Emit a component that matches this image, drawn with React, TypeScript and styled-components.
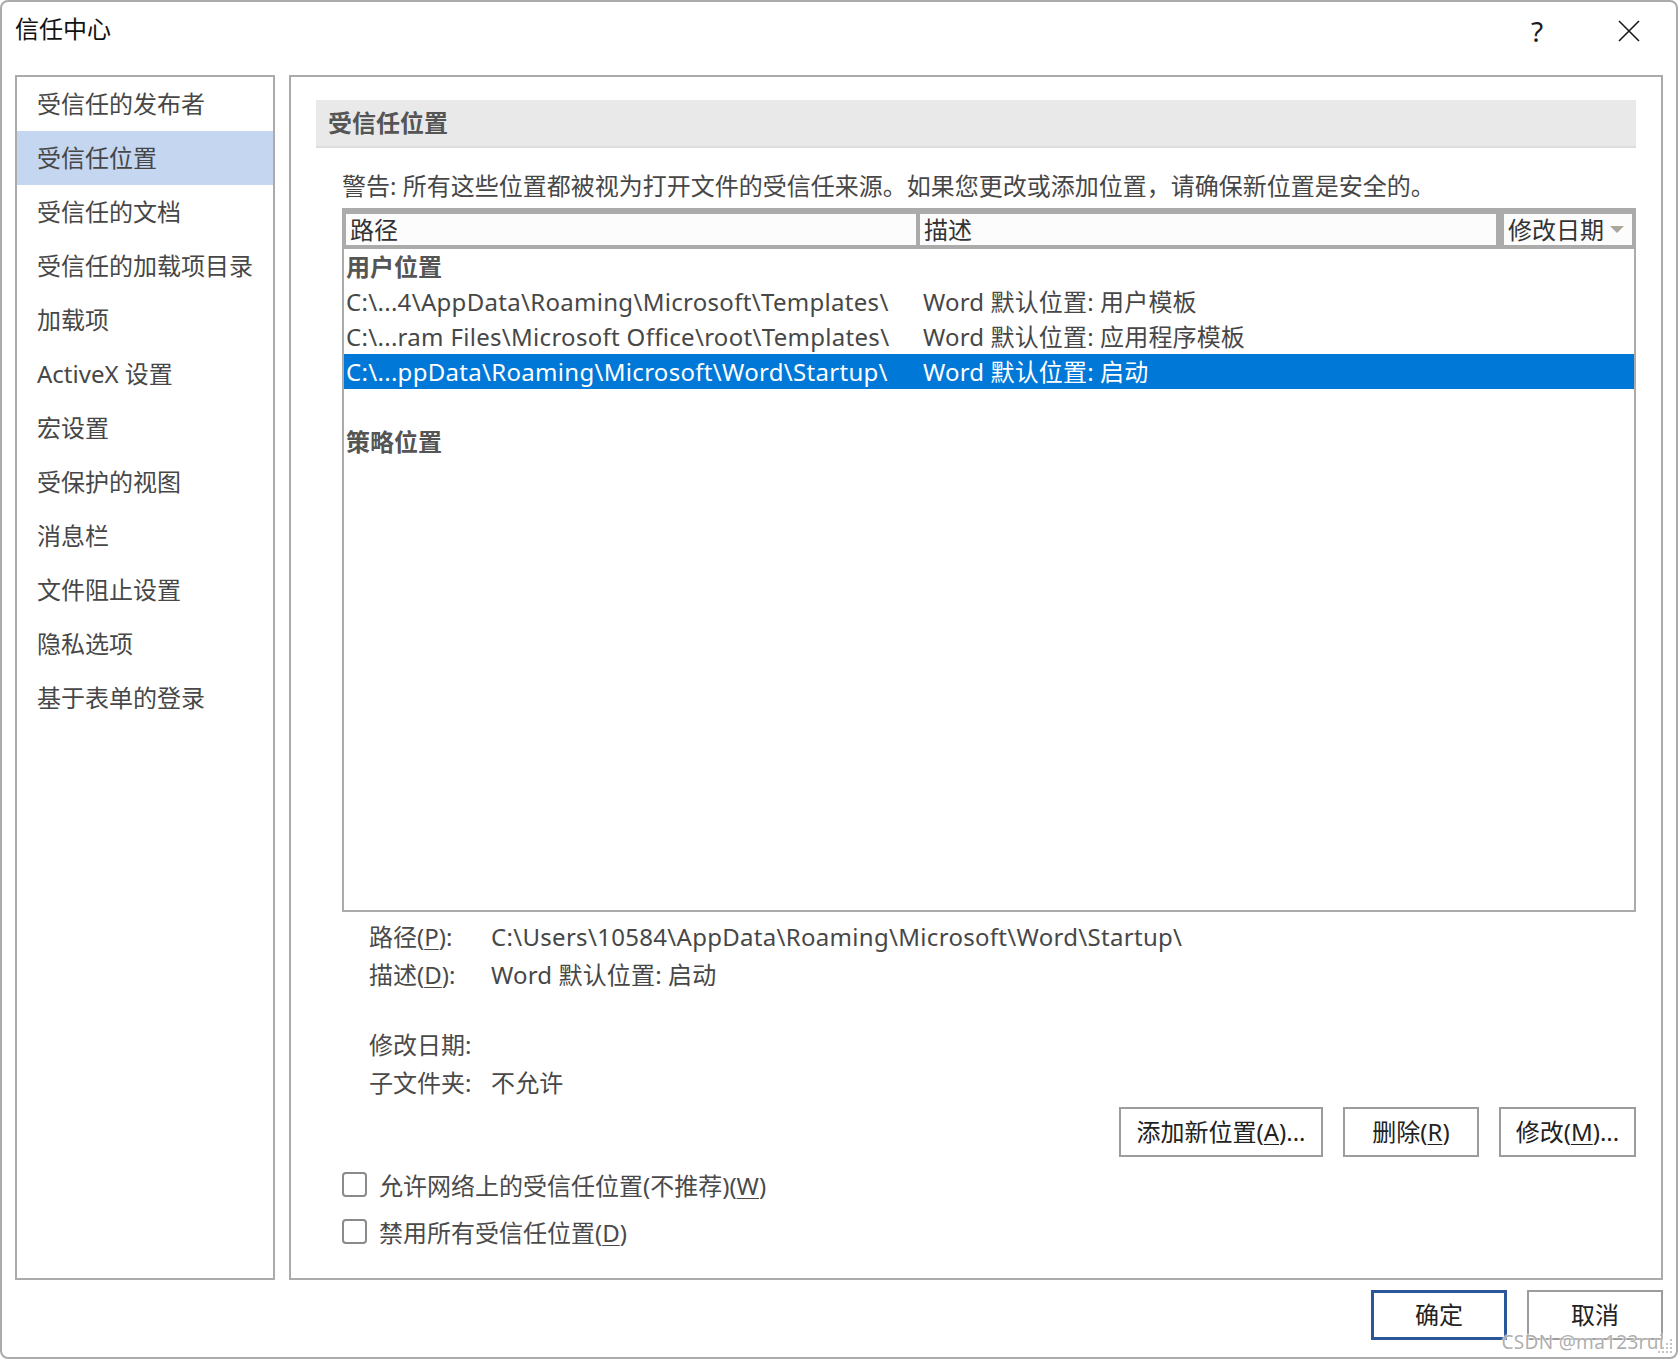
import React from "react";
import styled, { createGlobalStyle } from "styled-components";

const FONT = `"Noto Sans", "Noto Sans CJK SC", sans-serif`;

const GlobalStyle = createGlobalStyle`
  html, body {
    margin: 0;
    padding: 0;
    background: #ffffff;
  }
  body {
    font-family: ${FONT};
  }
  * {
    box-sizing: border-box;
  }
`;

const navItems = [
  "受信任的发布者",
  "受信任位置",
  "受信任的文档",
  "受信任的加载项目录",
  "加载项",
  "ActiveX 设置",
  "宏设置",
  "受保护的视图",
  "消息栏",
  "文件阻止设置",
  "隐私选项",
  "基于表单的登录",
];

const userRows = [
  {
    path: "C:\\...4\\AppData\\Roaming\\Microsoft\\Templates\\",
    desc: "Word 默认位置: 用户模板",
  },
  {
    path: "C:\\...ram Files\\Microsoft Office\\root\\Templates\\",
    desc: "Word 默认位置: 应用程序模板",
  },
  {
    path: "C:\\...ppData\\Roaming\\Microsoft\\Word\\Startup\\",
    desc: "Word 默认位置: 启动",
    selected: true,
  },
];

const Mn = ({ children }: { children: React.ReactNode }) => <Underline>{children}</Underline>;

const App = () => {
  return (
    <>
      <GlobalStyle />
      <Window>
        <TitleBar>
          <Title>信任中心</Title>
          <TitleActions>
            <TitleButton>
              <HelpMark>?</HelpMark>
            </TitleButton>
            <TitleButton>
              <svg width="22" height="22" viewBox="0 0 22 22">
                <path d="M1 1 L21 21 M21 1 L1 21" stroke="#1a1a1a" strokeWidth="1.6" fill="none" />
              </svg>
            </TitleButton>
          </TitleActions>
        </TitleBar>

        <Body>
          <Nav>
            {navItems.map((item) => (
              <NavItem key={item} $active={item === "受信任位置"}>
                {item}
              </NavItem>
            ))}
          </Nav>

          <Panel>
            <SectionHeader>受信任位置</SectionHeader>

            <Content>
              <Warning>
                警告: 所有这些位置都被视为打开文件的受信任来源。如果您更改或添加位置，请确保新位置是安全的。
              </Warning>

              <ListBox>
                <ListHeader>
                  <HeaderCell $width={570}>路径</HeaderCell>
                  <HeaderCell $grow>描述</HeaderCell>
                  <HeaderCell $width={128} $gap={8}>
                    修改日期
                    <SortArrow width="14" height="8" viewBox="0 0 14 8">
                      <polygon points="0,0 14,0 7,7" fill="#a9a79b" />
                    </SortArrow>
                  </HeaderCell>
                </ListHeader>

                <ListRow>
                  <GroupLabel>用户位置</GroupLabel>
                </ListRow>
                {userRows.map((row) => (
                  <ListRow key={row.path} $selected={row.selected}>
                    <PathCol>{row.path}</PathCol>
                    <DescCol>{row.desc}</DescCol>
                  </ListRow>
                ))}
                <ListRow />
                <ListRow>
                  <GroupLabel>策略位置</GroupLabel>
                </ListRow>
              </ListBox>

              <Details>
                <DetailRow>
                  <DetailLabel>
                    路径(<Mn>P</Mn>):
                  </DetailLabel>
                  <DetailValue $latin>C:\Users\10584\AppData\Roaming\Microsoft\Word\Startup\</DetailValue>
                </DetailRow>
                <DetailRow>
                  <DetailLabel>
                    描述(<Mn>D</Mn>):
                  </DetailLabel>
                  <DetailValue>Word 默认位置: 启动</DetailValue>
                </DetailRow>
                <DetailSpacer />
                <DetailRow>
                  <DetailLabel>修改日期:</DetailLabel>
                  <DetailValue />
                </DetailRow>
                <DetailRow>
                  <DetailLabel>子文件夹:</DetailLabel>
                  <DetailValue>不允许</DetailValue>
                </DetailRow>
              </Details>

              <ActionRow>
                <Button $width={204}>
                  <ButtonLabel>
                    添加新位置(<Mn>A</Mn>)...
                  </ButtonLabel>
                </Button>
                <Button $width={136}>
                  <ButtonLabel>
                    删除(<Mn>R</Mn>)
                  </ButtonLabel>
                </Button>
                <Button $width={137}>
                  <ButtonLabel>
                    修改(<Mn>M</Mn>)...
                  </ButtonLabel>
                </Button>
              </ActionRow>

              <Checks>
                <CheckRow>
                  <CheckBox />
                  <span>
                    允许网络上的受信任位置(不推荐)(<Mn>W</Mn>)
                  </span>
                </CheckRow>
                <CheckRow>
                  <CheckBox />
                  <span>
                    禁用所有受信任位置(<Mn>D</Mn>)
                  </span>
                </CheckRow>
              </Checks>
            </Content>
          </Panel>
        </Body>

        <Footer>
          <Button $width={136} $primary>
            <ButtonLabel>确定</ButtonLabel>
          </Button>
          <Button $width={136}>
            <ButtonLabel>取消</ButtonLabel>
          </Button>
        </Footer>

        <Watermark>CSDN @ma123rui</Watermark>
        <Grip width="18" height="18" viewBox="0 0 18 18">
          {[
            [15, 3],
            [11, 7],
            [15, 7],
            [7, 11],
            [11, 11],
            [15, 11],
            [3, 15],
            [7, 15],
            [11, 15],
            [15, 15],
          ].map(([cx, cy]) => (
            <rect key={`${cx}-${cy}`} x={cx - 1} y={cy - 1} width="2" height="2" fill="#c4c4c4" />
          ))}
        </Grip>
      </Window>
    </>
  );
};

const Window = styled.div`
  position: relative;
  width: 1678px;
  height: 1359px;
  border: 2px solid #ababab;
  border-radius: 8px;
  background: #ffffff;
  display: flex;
  flex-direction: column;
  overflow: hidden;
  font-family: ${FONT};
  font-size: 24px;
  color: #444444;
`;

const TitleBar = styled.div`
  height: 73px;
  display: flex;
  align-items: flex-start;
  padding: 10px 17px 0 13px;
`;

const Title = styled.div`
  font-size: 24px;
  line-height: 34px;
  color: #111111;
`;

const TitleActions = styled.div`
  margin-left: auto;
  margin-top: 2px;
  display: flex;
  gap: 27px;
`;

const TitleButton = styled.div`
  width: 60px;
  height: 34px;
  display: flex;
  align-items: center;
  justify-content: center;
`;

const HelpMark = styled.span`
  font-family: "Noto Sans", sans-serif;
  font-size: 28px;
  font-weight: 400;
  color: #1a1a1a;
  line-height: 34px;
  margin-right: 10px;
`;

const Body = styled.div`
  height: 1205px;
  display: flex;
  gap: 14px;
  padding: 0 13px;
`;

const Nav = styled.div`
  width: 260px;
  border: 2px solid #ababab;
  display: flex;
  flex-direction: column;
`;

const NavItem = styled.div<{ $active?: boolean }>`
  height: 54px;
  display: flex;
  align-items: center;
  padding: 0 0 4px 20px;
  white-space: nowrap;
  color: #474747;
  background: ${(p) => (p.$active ? "#c4d6f0" : "transparent")};
`;

const Panel = styled.div`
  flex: 1;
  border: 2px solid #ababab;
  padding: 23px 25px 0 25px;
  display: flex;
  flex-direction: column;
`;

const SectionHeader = styled.div`
  height: 48px;
  background: #e9e9e9;
  border-bottom: 2px solid #dedede;
  display: flex;
  align-items: center;
  padding: 0 0 3px 12px;
  font-weight: 700;
  color: #555555;
`;

const Content = styled.div`
  padding-left: 26px;
  display: flex;
  flex-direction: column;
`;

const Warning = styled.div`
  margin-top: 21px;
  line-height: 34px;
  white-space: nowrap;
  color: #474747;
`;

const ListBox = styled.div`
  margin-top: 5px;
  height: 704px;
  border: 2px solid #ababab;
  border-top: none;
  display: flex;
  flex-direction: column;
`;

const ListHeader = styled.div`
  display: flex;
  background: #ababab;
  padding: 6px 4px 4px 4px;
  margin: 0 -2px;
  gap: 4px;
`;

const HeaderCell = styled.div<{ $width?: number; $grow?: boolean; $gap?: number }>`
  position: relative;
  ${(p) => (p.$grow ? "flex: 1;" : `width: ${p.$width}px; flex: none;`)}
  ${(p) => (p.$gap ? `margin-left: ${p.$gap - 4}px;` : "")}
  height: 31px;
  line-height: 31px;
  background: #fcfcfc;
  padding-left: 4px;
  color: #333333;
  white-space: nowrap;
  overflow: hidden;
  display: flex;
  align-items: center;
`;

const SortArrow = styled.svg`
  position: absolute;
  right: 8px;
  top: 12px;
`;

const ListRow = styled.div<{ $selected?: boolean }>`
  height: 35px;
  line-height: 35px;
  display: flex;
  padding-left: 2px;
  white-space: nowrap;
  background: ${(p) => (p.$selected ? "#0078d7" : "transparent")};
  color: ${(p) => (p.$selected ? "#ffffff" : "#474747")};
`;

const GroupLabel = styled.div`
  font-weight: 700;
  color: #555555;
`;

const PathCol = styled.div`
  width: 577px;
  flex: none;
  overflow: hidden;
  letter-spacing: 0.3px;
`;

const DescCol = styled.div`
  flex: 1;
  letter-spacing: 0.15px;
`;

const Details = styled.div`
  margin-top: 6px;
  padding-left: 27px;
  display: flex;
  flex-direction: column;
`;

const DetailRow = styled.div`
  height: 38px;
  line-height: 38px;
  display: flex;
  white-space: nowrap;
`;

const DetailLabel = styled.div`
  width: 122px;
  flex: none;
  color: #4a4a4a;
`;

const DetailValue = styled.div<{ $latin?: boolean }>`
  color: #474747;
  letter-spacing: ${(p) => (p.$latin ? "0.3px" : "0.15px")};
`;

const DetailSpacer = styled.div`
  height: 32px;
`;

const Underline = styled.span`
  text-decoration: underline;
  text-underline-offset: 3px;
  text-decoration-thickness: 1px;
`;

const ActionRow = styled.div`
  margin-top: 5px;
  display: flex;
  justify-content: flex-end;
  gap: 20px;
`;

const Button = styled.div<{ $width: number; $primary?: boolean }>`
  width: ${(p) => p.$width}px;
  height: 50px;
  border: ${(p) => (p.$primary ? "3px solid #2b579a" : "2px solid #9c9c9c")};
  background: #ffffff;
  color: #222222;
  display: flex;
  align-items: center;
  justify-content: center;
  white-space: nowrap;
`;

const ButtonLabel = styled.span`
  line-height: 28px;
`;

const Checks = styled.div`
  margin-top: 8px;
  display: flex;
  flex-direction: column;
  gap: 9px;
`;

const CheckRow = styled.div`
  height: 38px;
  display: flex;
  align-items: center;
  gap: 12px;
  color: #4a4a4a;
  white-space: nowrap;
`;

const CheckBox = styled.span`
  width: 25px;
  height: 25px;
  border: 2px solid #8a8a8a;
  border-radius: 4px;
  background: #ffffff;
  flex: none;
`;

const Footer = styled.div`
  display: flex;
  justify-content: flex-end;
  gap: 20px;
  padding: 10px 13px 0 0;
`;

const Watermark = styled.div`
  position: absolute;
  right: 12px;
  bottom: 5px;
  font-size: 19px;
  line-height: 19px;
  color: rgba(160, 160, 160, 0.85);
  text-shadow: 0 0 2px #ffffff, 0 0 2px #ffffff;
  letter-spacing: 0.3px;
  pointer-events: none;
`;

const Grip = styled.svg`
  position: absolute;
  right: 2px;
  bottom: 2px;
`;

export default App;
